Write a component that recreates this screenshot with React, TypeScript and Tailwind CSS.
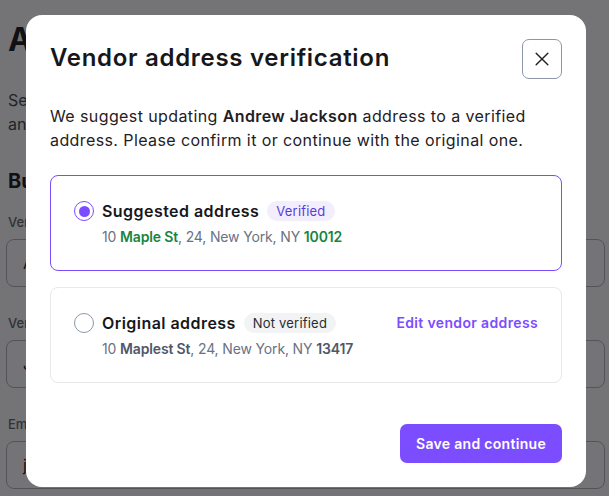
import React from "react";

function Radio({ checked }: { checked?: boolean }) {
  return checked ? (
    <span className="flex h-5 w-5 shrink-0 items-center justify-center rounded-full border-[1.5px] border-[#7c4dff] bg-white">
      <span className="h-[11px] w-[11px] rounded-full bg-[#7c4dff]" />
    </span>
  ) : (
    <span className="h-5 w-5 shrink-0 rounded-full border-[1.5px] border-[#8d96a8] bg-white" />
  );
}

function BackgroundPage() {
  return (
    <div className="flex min-h-[496px] flex-col bg-white px-[6px] pt-[22px] text-[#111318]">
      <h1 className="pl-[2px] text-[32px] font-bold leading-[36px]">Add vendor</h1>
      <p className="mt-[30px] pl-[2px] text-[16px] leading-[24px] text-[#3b3f47]">
        Set up a new vendor so you can pay their bills
        <br />
        and keep their details in one place.
      </p>
      <h2 className="mt-[31px] pl-[2px] text-[20px] font-bold leading-[28px]">Business details</h2>
      {["Vendor name", "Vendor contact", "Email"].map((label, i) => (
        <div key={label} className={i === 0 ? "mt-[18px]" : "mt-[27px]"}>
          <div className="pl-[2px] text-[13px] font-medium leading-[18px] text-[#5d626d]">{label}</div>
          <div className="mt-[8px] mr-[-2px] flex h-[48px] items-center rounded-[8px] border border-[#aeb3bd] px-[16px] text-[16px] text-[#111318]">
            {i === 0 ? "Andrew Jackson" : i === 1 ? "Jackson" : "jackson@mail.com"}
          </div>
        </div>
      ))}
    </div>
  );
}

export default function App() {
  return (
    <div className="relative h-[496px] w-[609px] overflow-hidden" style={{ fontFamily: "Inter, 'Noto Sans', sans-serif" }}>
      <BackgroundPage />
      <div className="absolute inset-0 bg-[#0f1013]/[0.58]" />
      <div className="absolute left-[26px] top-[15px] flex w-[560px] flex-col rounded-[16px] bg-white px-[24px] pb-[24px] pt-[24px]">
        <div className="flex items-start justify-between">
          <h2 className="pt-[3px] text-[24px] font-semibold leading-[32px] tracking-[0.7px] text-[#16171b]">
            Vendor address verification
          </h2>
          <button className="flex h-[40px] w-[40px] items-center justify-center rounded-[7px] border border-[#8d96a8] bg-white text-[#1f2024]">
            <svg width="20" height="20" viewBox="0 0 24 24" fill="none" stroke="currentColor" strokeWidth="1.7" strokeLinecap="round">
              <path d="M5 5l14 14M19 5L5 19" />
            </svg>
          </button>
        </div>

        <p className="mt-[25px] text-[16px] leading-[24px] tracking-[0.4px] text-[#1f2024]">
          We suggest updating <span className="font-semibold">Andrew Jackson</span> address to a verified address. Please
          confirm it or continue with the original one.
        </p>

        <div className="mt-[23px] flex flex-col gap-[16px]">
          <div className="flex items-center rounded-[8px] border border-[#7c4dff] px-[23px] pb-[23px] pt-[23px]">
            <div className="flex flex-col gap-[4px]">
              <div className="flex h-[24px] items-center gap-[8px]">
                <Radio checked />
                <span className="text-[16px] font-semibold tracking-[0.45px] text-[#16171b]">Suggested address</span>
                <span className="rounded-full bg-[#f2eefe] px-[9px] py-[2px] text-[13px] leading-[16px] tracking-[0.2px] text-[#5b3bd9]">
                  Verified
                </span>
              </div>
              <div className="pl-[28px] text-[14px] leading-[20px] tracking-[-0.15px] text-[#6a7283]">
                10 <span className="font-semibold text-[#17853f]">Maple St</span>, 24, New York, NY{" "}
                <span className="font-semibold text-[#17853f]">10012</span>
              </div>
            </div>
          </div>

          <div className="flex items-center justify-between rounded-[8px] border border-[#e6e8ec] px-[23px] pb-[23px] pt-[23px]">
            <div className="flex flex-col gap-[4px]">
              <div className="flex h-[24px] items-center gap-[8px]">
                <Radio />
                <span className="text-[16px] font-semibold tracking-[0.45px] text-[#16171b]">Original address</span>
                <span className="rounded-full bg-[#f1f3f5] px-[9px] py-[2px] text-[13px] leading-[16px] tracking-[0.2px] text-[#2a2c31]">
                  Not verified
                </span>
              </div>
              <div className="pl-[28px] text-[14px] leading-[20px] tracking-[-0.15px] text-[#6a7283]">
                10 <span className="font-semibold text-[#4f5769]">Maplest St</span>, 24, New York, NY{" "}
                <span className="font-semibold text-[#4f5769]">13417</span>
              </div>
            </div>
            <span className="self-start pt-[1px] text-[14px] font-semibold leading-[22px] tracking-[0.35px] text-[#7c4dff]">
              Edit vendor address
            </span>
          </div>
        </div>

        <div className="mt-[41px] flex justify-end">
          <button className="h-[39px] rounded-[7px] bg-[#7c4dff] px-[16px] text-[14px] font-semibold tracking-[0.3px] text-white">
            Save and continue
          </button>
        </div>
      </div>
    </div>
  );
}
